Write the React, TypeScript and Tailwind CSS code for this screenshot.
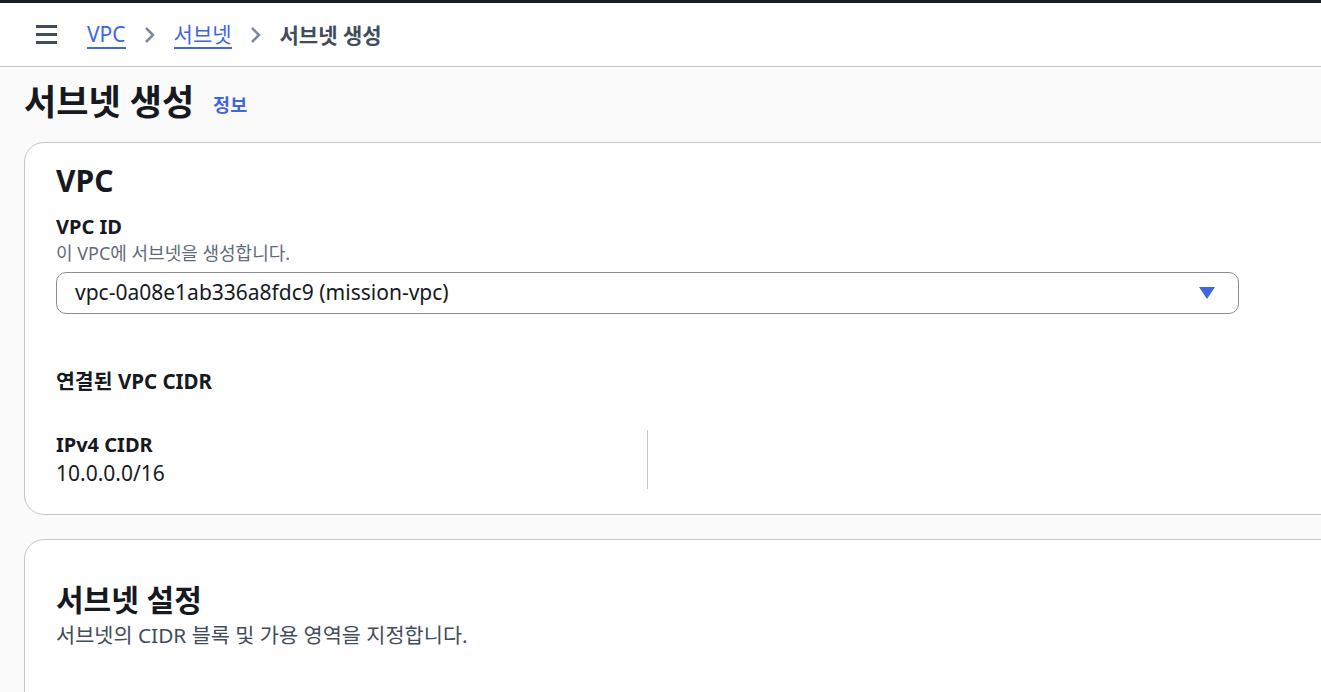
const font = { fontFamily: '"Noto Sans", "Noto Sans CJK KR", sans-serif' };

const Chevron = () => (
  <svg width="14" height="18" viewBox="0 0 14 18" className="shrink-0">
    <path d="M3 2l7 7-7 7" fill="none" stroke="#7d8998" strokeWidth="2.5" />
  </svg>
);

export default function App() {
  return (
    <div className="h-[692px] w-[1321px] overflow-hidden bg-[#fafafa] text-[#16191f]" style={font}>
      {/* top strip */}
      <div className="h-[3px] bg-[#161d26]" />

      {/* breadcrumb header */}
      <div className="flex h-[64px] items-center border-b border-[#c6c6cd] bg-white pl-[36px]">
        <div className="flex w-[21px] flex-col gap-[5px]">
          <span className="h-[3px] bg-[#414d5c]" />
          <span className="h-[3px] bg-[#414d5c]" />
          <span className="h-[3px] bg-[#414d5c]" />
        </div>
        <nav className="ml-[30px] flex items-center gap-[17px] text-[21px]">
          <a className="border-b-2 border-[#4066e0] leading-[26px] text-[#4066e0]">VPC</a>
          <Chevron />
          <a className="border-b-2 border-[#4066e0] leading-[26px] text-[#4066e0]">서브넷</a>
          <Chevron />
          <span className="font-bold leading-[26px] text-[#414d5c]">서브넷 생성</span>
        </nav>
      </div>

      <div className="pl-[24px]">
        {/* page title */}
        <div className="flex h-[75px] items-center gap-[19px] pb-[5px]">
          <h1 className="text-[35px] font-bold leading-[44px]">서브넷 생성</h1>
          <span className="mt-[6px] text-[18.5px] font-bold text-[#4066e0]">정보</span>
        </div>

        {/* VPC card */}
        <section className="w-[1340px] rounded-[20px] border border-[#c6c6cd] bg-white pb-[25px] pl-[31px] pt-[19px]">
          <h2 className="text-[30px] font-bold leading-[38px]">VPC</h2>
          <div className="mt-[14px] text-[20px] font-bold leading-[26px]">VPC ID</div>
          <div className="mt-[1px] text-[18px] leading-[24px] text-[#5f6b7a]">이 VPC에 서브넷을 생성합니다.</div>
          <div className="mt-[7px] flex h-[42px] w-[1183px] items-center justify-between rounded-[10px] border border-[#8c8c94] pl-[18px] pr-[23px]">
            <span className="text-[21px]">vpc-0a08e1ab336a8fdc9 (mission-vpc)</span>
            <svg width="16" height="12" viewBox="0 0 16 12">
              <path d="M0 0h16L8 12z" fill="#4066e0" />
            </svg>
          </div>

          <h3 className="mt-[53px] text-[20.5px] font-bold leading-[28px]">연결된 VPC CIDR</h3>

          <div className="mt-[35px] flex">
            <div className="flex w-[592px] flex-col border-r border-[#c6c6cd] pb-[2px] pt-[1px]">
              <div className="text-[20px] font-bold leading-[28px]">IPv4 CIDR</div>
              <div className="text-[21px] leading-[28px]">10.0.0.0/16</div>
            </div>
          </div>
        </section>

        {/* subnet settings card */}
        <section className="mt-[24px] h-[200px] w-[1340px] rounded-[20px] border border-[#c6c6cd] bg-white pl-[31px] pt-[40px]">
          <h2 className="text-[30px] font-bold leading-[40px]">서브넷 설정</h2>
          <p className="text-[20.8px] leading-[30px] text-[#414d5c]">서브넷의 CIDR 블록 및 가용 영역을 지정합니다.</p>
        </section>
      </div>
    </div>
  );
}
